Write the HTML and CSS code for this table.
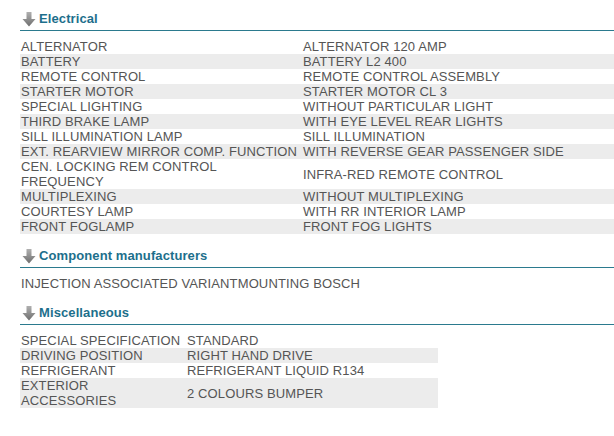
FILE: index.html
```html
<!DOCTYPE html>
<html>
<head>
<meta charset="utf-8">
<link rel="stylesheet" href="styles.css">
</head>
<body>
<div class="page">
  <section class="section">
    <h2 class="heading"><svg class="arrow" viewBox="0 0 14 15" width="14" height="15"><defs><linearGradient id="g1" x1="0" y1="0" x2="0" y2="1"><stop offset="0" stop-color="#b0b0b0"/><stop offset="1" stop-color="#6e6e6e"/></linearGradient></defs><path d="M4.5 0H9.5V7H13.5L7 14.5L0.5 7H4.5Z" fill="url(#g1)"/></svg><span>Electrical</span></h2>
    <div class="table elec">
      <div class="row"><div class="cell">ALTERNATOR</div><div class="cell">ALTERNATOR 120 AMP</div></div>
      <div class="row"><div class="cell">BATTERY</div><div class="cell">BATTERY L2 400</div></div>
      <div class="row"><div class="cell">REMOTE CONTROL</div><div class="cell">REMOTE CONTROL ASSEMBLY</div></div>
      <div class="row"><div class="cell">STARTER MOTOR</div><div class="cell">STARTER MOTOR CL 3</div></div>
      <div class="row"><div class="cell">SPECIAL LIGHTING</div><div class="cell">WITHOUT PARTICULAR LIGHT</div></div>
      <div class="row"><div class="cell">THIRD BRAKE LAMP</div><div class="cell">WITH EYE LEVEL REAR LIGHTS</div></div>
      <div class="row"><div class="cell">SILL ILLUMINATION LAMP</div><div class="cell">SILL ILLUMINATION</div></div>
      <div class="row"><div class="cell">EXT. REARVIEW MIRROR COMP. FUNCTION</div><div class="cell">WITH REVERSE GEAR PASSENGER SIDE</div></div>
      <div class="row"><div class="cell">CEN. LOCKING REM CONTROL<br>FREQUENCY</div><div class="cell">INFRA-RED REMOTE CONTROL</div></div>
      <div class="row"><div class="cell">MULTIPLEXING</div><div class="cell">WITHOUT MULTIPLEXING</div></div>
      <div class="row"><div class="cell">COURTESY LAMP</div><div class="cell">WITH RR INTERIOR LAMP</div></div>
      <div class="row"><div class="cell">FRONT FOGLAMP</div><div class="cell">FRONT FOG LIGHTS</div></div>
    </div>
  </section>
  <section class="section">
    <h2 class="heading"><svg class="arrow" viewBox="0 0 14 15" width="14" height="15"><defs><linearGradient id="g2" x1="0" y1="0" x2="0" y2="1"><stop offset="0" stop-color="#b0b0b0"/><stop offset="1" stop-color="#6e6e6e"/></linearGradient></defs><path d="M4.5 0H9.5V7H13.5L7 14.5L0.5 7H4.5Z" fill="url(#g2)"/></svg><span>Component manufacturers</span></h2>
    <div class="plain"><span>INJECTION ASSOCIATED VARIANT</span><span>MOUNTING BOSCH</span></div>
  </section>
  <section class="section">
    <h2 class="heading"><svg class="arrow" viewBox="0 0 14 15" width="14" height="15"><defs><linearGradient id="g3" x1="0" y1="0" x2="0" y2="1"><stop offset="0" stop-color="#b0b0b0"/><stop offset="1" stop-color="#6e6e6e"/></linearGradient></defs><path d="M4.5 0H9.5V7H13.5L7 14.5L0.5 7H4.5Z" fill="url(#g3)"/></svg><span>Miscellaneous</span></h2>
    <div class="table misc">
      <div class="row"><div class="cell">SPECIAL SPECIFICATION</div><div class="cell">STANDARD</div></div>
      <div class="row"><div class="cell">DRIVING POSITION</div><div class="cell">RIGHT HAND DRIVE</div></div>
      <div class="row"><div class="cell">REFRIGERANT</div><div class="cell">REFRIGERANT LIQUID R134</div></div>
      <div class="row"><div class="cell">EXTERIOR<br>ACCESSORIES</div><div class="cell">2 COLOURS BUMPER</div></div>
    </div>
  </section>
</div>
</body>
</html>
```

FILE: styles.css
```css
html, body {
  margin: 0;
  padding: 0;
  background: #ffffff;
}
body {
  font-family: "Liberation Sans", Arial, sans-serif;
  font-size: 13px;
  letter-spacing: 0.12px;
  color: #555555;
}
.page {
  padding: 11px 0 0 20px;
}
.section + .section {
  margin-top: 14px;
}
.heading {
  display: flex;
  align-items: center;
  margin: 0;
  padding: 0 0 3px 1px;
  border-bottom: 1px solid #2b7a8e;
  font-size: 13px;
  line-height: 16px;
  font-weight: bold;
  letter-spacing: 0.1px;
  color: #1d6f8c;
}
.arrow {
  display: block;
  margin: 1px 3px 0 1px;
  flex: none;
}
.table {
  margin-top: 8px;
  display: flex;
  flex-direction: column;
}
.row {
  display: grid;
  line-height: 15px;
}
.row:nth-child(even) {
  background: #ececec;
}
.elec .row {
  grid-template-columns: 282px 1fr;
}
.misc {
  width: 418px;
}
.misc .row {
  grid-template-columns: 166px 1fr;
}
.cell {
  padding-left: 1px;
  align-self: center;
  white-space: nowrap;
}
.plain {
  margin-top: 8px;
  padding-left: 1px;
  line-height: 15px;
}
```
